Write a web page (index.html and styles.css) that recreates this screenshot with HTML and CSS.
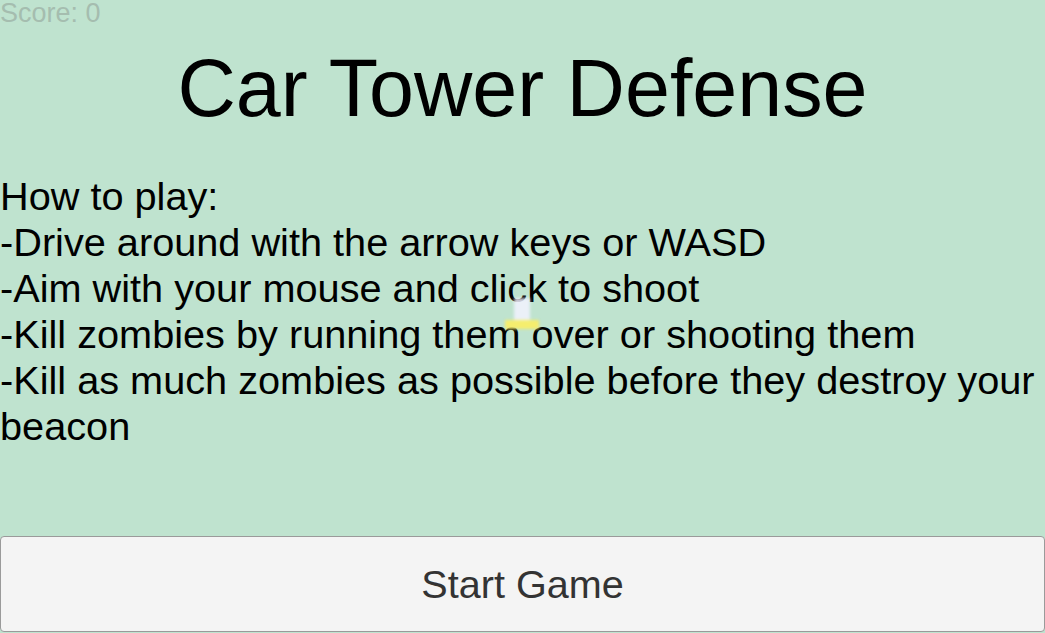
FILE: index.html
```html
<!DOCTYPE html>
<html>
<head>
    <title>Car Tower Defense</title>
    <meta charset=utf-8>
    <meta name=viewport content="width=device-width, initial-scale=1">
    <link rel="stylesheet" href="styles.css">
</head>
<body>
    <div id="wrap">
        <div id="score">Score: 0</div>
        <div id="menu">
            <h1 class="title">Car Tower Defense</h1>
            <p class="howto">
                How to play:<br>
                -Drive around with the arrow keys or WASD<br>
                -Aim with your mouse and click to shoot<br>
                -Kill zombies by running them over or shooting them<br>
                -Kill as much zombies as possible before they destroy your beacon
            </p>
            <button class="start">Start Game</button>
        </div>
        <div id="car"><div class="body"></div><div class="lights"></div></div>
    </div>
</body>
</html>
```

FILE: styles.css
```css
body{
    margin: 0;
    font-family: "Liberation Sans", Arial, sans-serif;
    background: #bfe3cf;
    overflow: hidden;
}
#wrap{
    position: relative;
    height: 633px;
    display: flex;
    flex-direction: column;
}
#score{
    font-size: 27px;
    line-height: 26px;
    color: #a5bdaf;
    height: 26px;
}
#menu{
    flex: 1;
    display: flex;
    flex-direction: column;
}
.title{
    margin: 16px 0 0;
    font-size: 80.8px;
    font-weight: normal;
    line-height: 92px;
    text-align: center;
    color: #000;
}
.howto{
    margin: 39px 0 0;
    font-size: 39.7px;
    line-height: 46px;
    color: #000;
}
.start{
    margin-top: auto;
    margin-bottom: 1px;
    height: 96px;
    width: 100%;
    background: #f4f4f4;
    border: 1px solid #9a9a9a;
    border-radius: 4px;
    font-family: "Liberation Sans", Arial, sans-serif;
    font-size: 39.6px;
    color: #333;
}
/* player car sprite sitting on the map */
#car{
    position: absolute;
    left: 505px;
    top: 298px;
    width: 34px;
    height: 32px;
    filter: blur(1.4px);
}
#car .body{
    margin: 0 auto;
    width: 16px;
    height: 22px;
    background: #f2f2ff;
    opacity: .85;
}
#car .lights{
    width: 34px;
    height: 9px;
    background: #f5ee6e;
}
```
